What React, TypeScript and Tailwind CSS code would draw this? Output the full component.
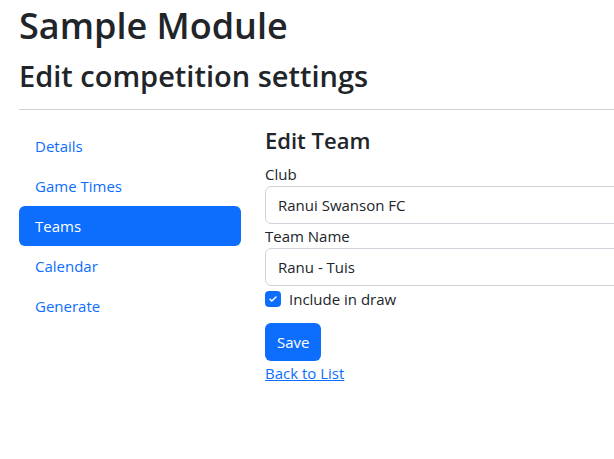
const font = { fontFamily: '"Open Sans", "Noto Sans", sans-serif' };

const navItems = ["Details", "Game Times", "Teams", "Calendar", "Generate"];

export default function App() {
  return (
    <div className="w-[614px] h-[459px] overflow-hidden bg-white text-[#212529]" style={font}>
      <div className="w-[760px] pl-[19px]">
        <h1 className="text-[36px] leading-[44px] font-semibold mt-[4px]">Sample Module</h1>
        <h2 className="text-[29px] leading-[34px] font-semibold mt-[11px]">Edit competition settings</h2>
        <hr className="mt-[16px] border-t border-[#cfcfcf]" />
        <div className="flex gap-6 mt-[16px]">
          <SideNav active="Teams" />
          <EditTeam />
        </div>
      </div>
    </div>
  );
}

function SideNav(props: { active: string }) {
  return (
    <ul className="w-[222px] flex flex-col">
      {navItems.map((item) => (
        <li key={item}>
          <a
            href="#"
            className={
              item === props.active
                ? "block h-10 px-4 leading-10 text-[15px] rounded-md bg-[#0d6efd] text-white"
                : "block h-10 px-4 leading-10 text-[15px] text-[#0d6efd]"
            }
          >
            {item}
          </a>
        </li>
      ))}
    </ul>
  );
}

function EditTeam() {
  return (
    <div className="flex-1">
      <h4 className="text-[22px] leading-[28px] font-semibold">Edit Team</h4>
      <label className="block text-[15px] leading-6 mt-[8px]">Club</label>
      <input
        readOnly
        value="Ranui Swanson FC"
        className="block w-full h-[38px] px-3 text-[15px] border border-[#ced4da] rounded-md outline-none"
      />
      <label className="block text-[15px] leading-6">Team Name</label>
      <input
        readOnly
        value="Ranu - Tuis"
        className="block w-full h-[38px] px-3 text-[15px] border border-[#ced4da] rounded-md outline-none"
      />
      <div className="flex items-center gap-2 mt-[1px] h-6">
        <span className="w-4 h-4 rounded-[4px] bg-[#0d6efd] flex items-center justify-center">
          <svg width="10" height="10" viewBox="0 0 20 20">
            <path d="M4 10.5l3.5 3.5L16 6" fill="none" stroke="#fff" strokeWidth="3" strokeLinecap="round" strokeLinejoin="round" />
          </svg>
        </span>
        <span className="text-[15px]">Include in draw</span>
      </div>
      <button className="mt-[12px] h-[38px] px-3 rounded-md bg-[#0d6efd] text-white text-[15px]">Save</button>
      <div>
        <a href="#" className="text-[15px] leading-6 text-[#0d6efd] underline">Back to List</a>
      </div>
    </div>
  );
}
